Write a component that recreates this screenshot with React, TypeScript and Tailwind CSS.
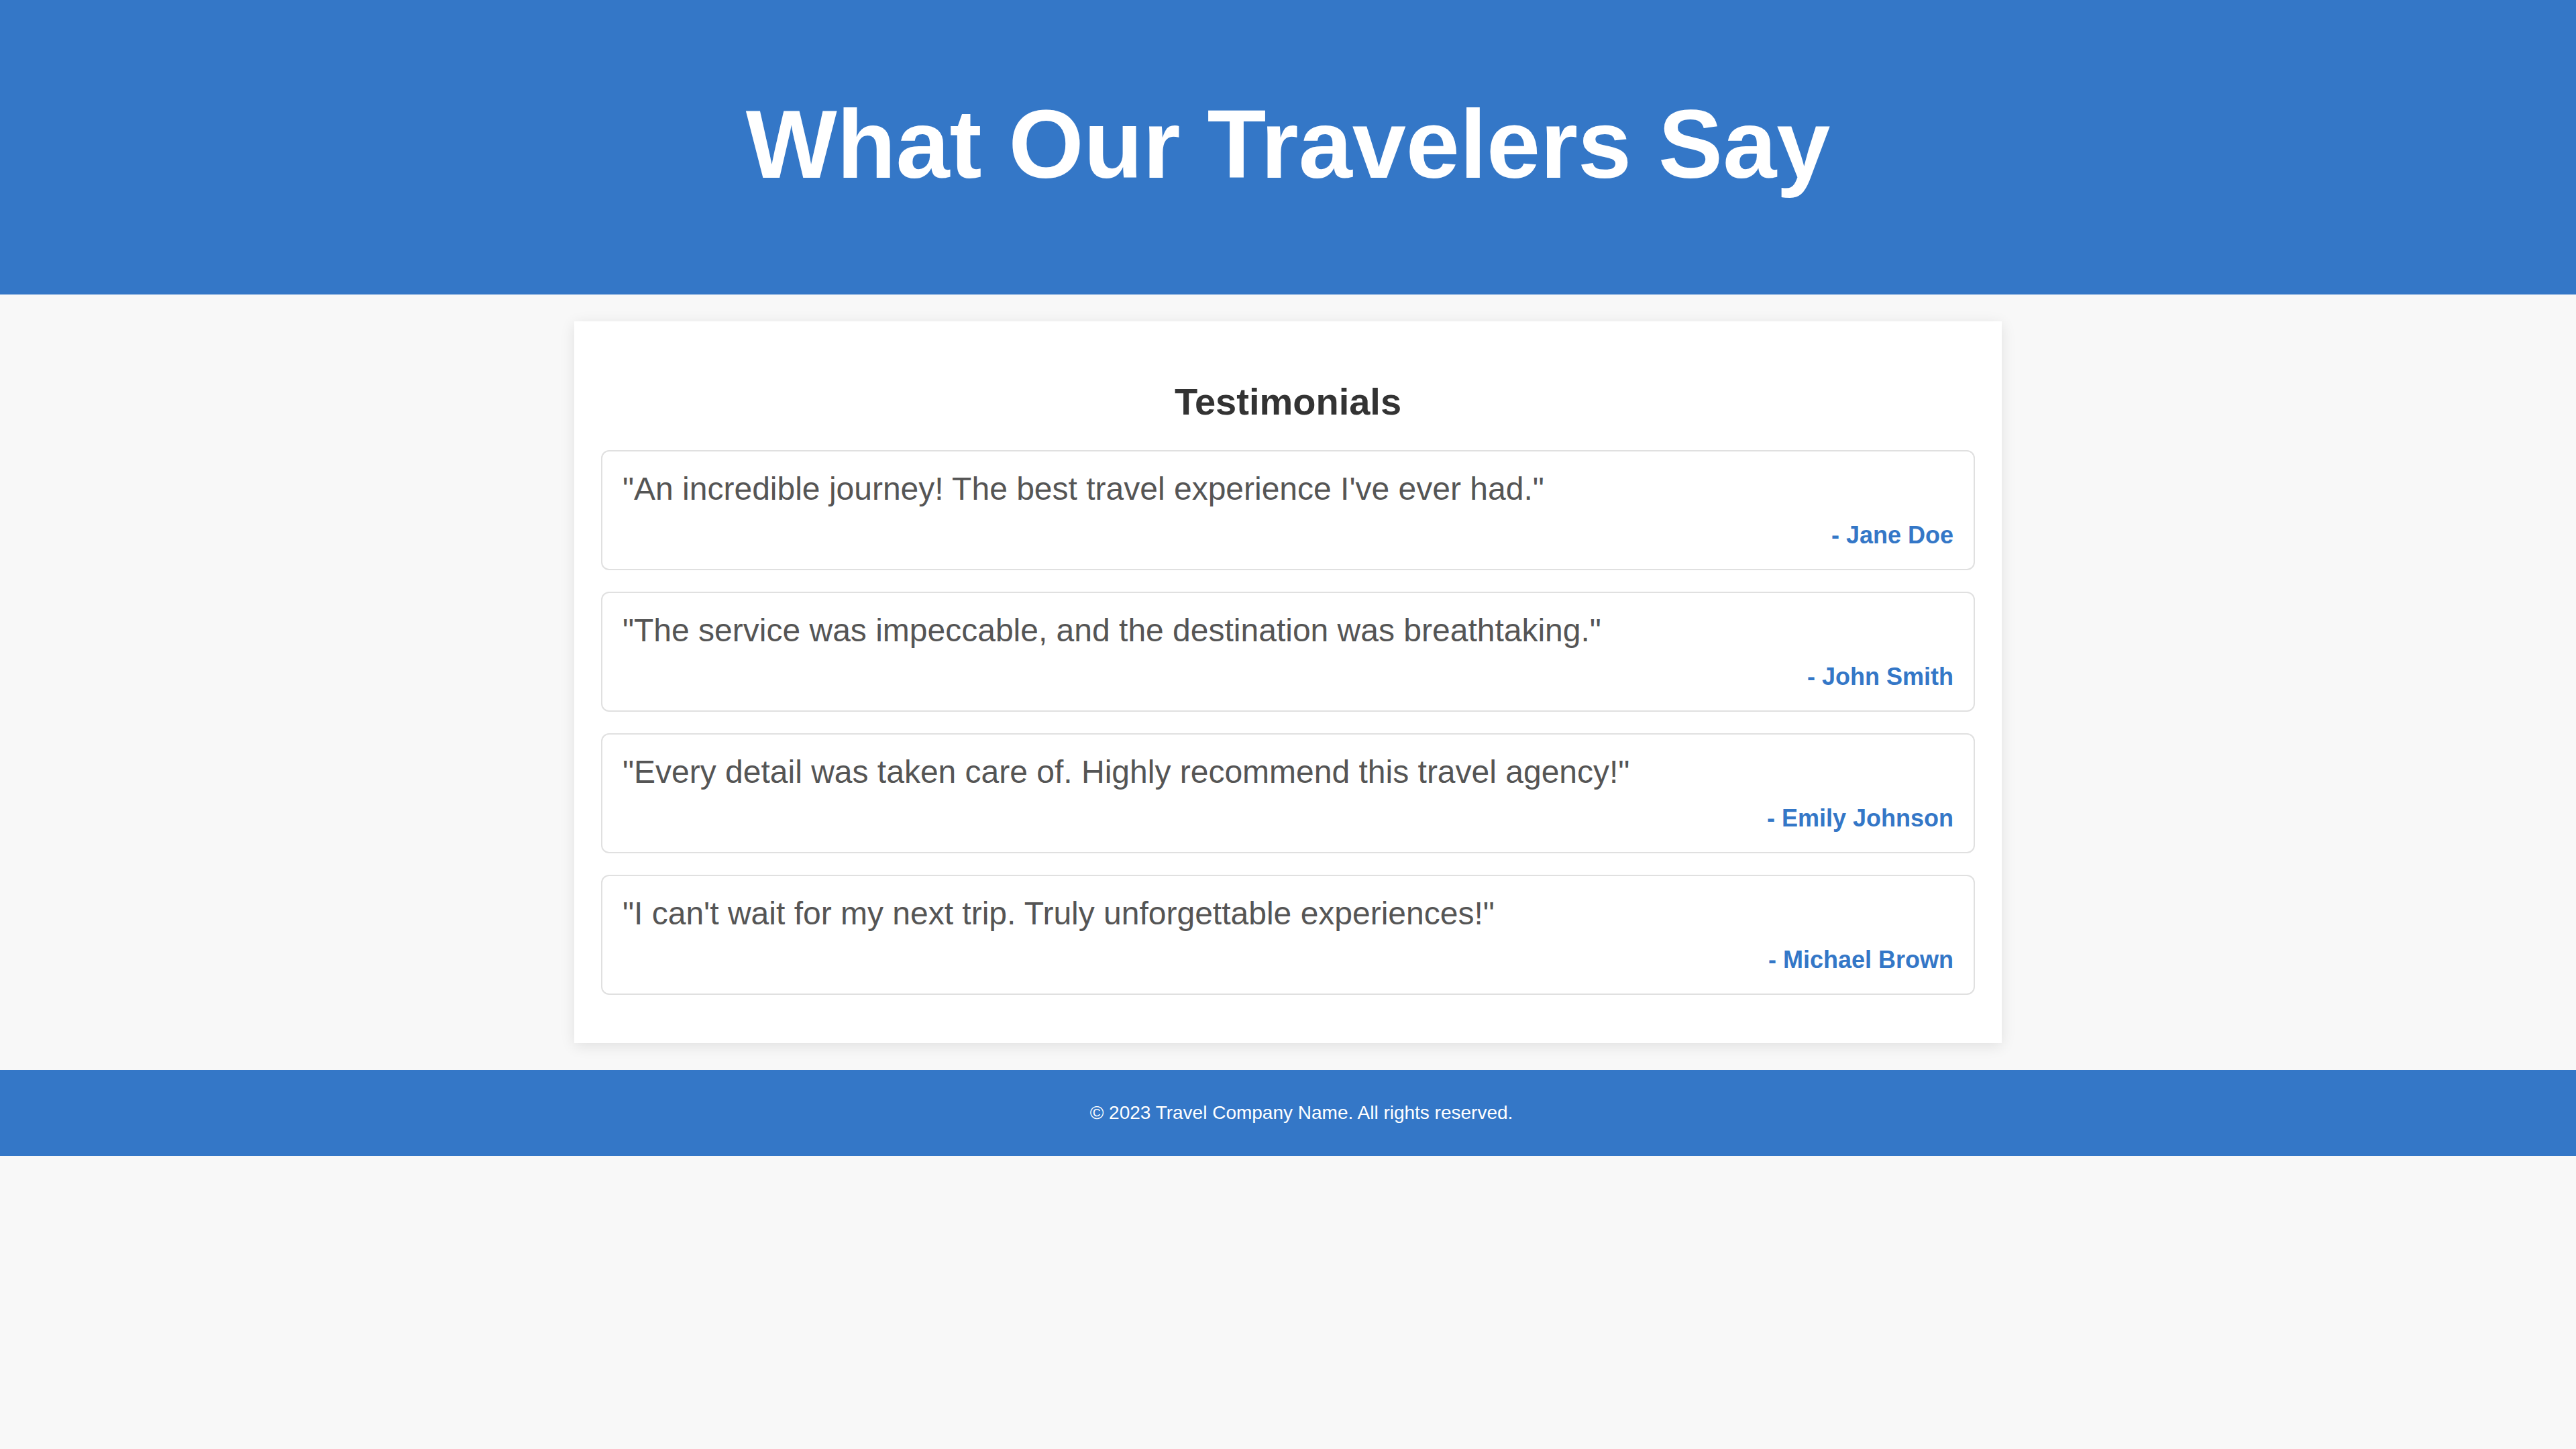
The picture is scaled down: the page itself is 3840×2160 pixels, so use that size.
const testimonials = [
  {
    quote: "\"An incredible journey! The best travel experience I've ever had.\"",
    author: "- Jane Doe",
  },
  {
    quote: "\"The service was impeccable, and the destination was breathtaking.\"",
    author: "- John Smith",
  },
  {
    quote: "\"Every detail was taken care of. Highly recommend this travel agency!\"",
    author: "- Emily Johnson",
  },
  {
    quote: "\"I can't wait for my next trip. Truly unforgettable experiences!\"",
    author: "- Michael Brown",
  },
];

export default function App() {
  return (
    <div className="min-h-[2160px] bg-[#f8f8f8] font-['Liberation_Sans',Arial,sans-serif]">
      <header className="bg-[#3477c7] pt-[133px] pb-[140px] text-center">
        <h1 className="text-[144px] leading-[166px] font-bold text-white">
          What Our Travelers Say
        </h1>
      </header>

      <main className="w-[2128px] mx-auto mt-[40px] bg-white p-[40px] shadow-[0_4px_20px_rgba(0,0,0,0.1)]">
        <h2 className="mt-[48px] mb-[40px] text-center text-[56px] leading-[64px] font-bold text-[#333]">
          Testimonials
        </h2>
        {testimonials.map((t, i) => (
          <div
            key={i}
            className="mb-[32px] rounded-[12px] border-2 border-[#e0e0e0] pt-[28px] pb-[30px] px-[30px]"
          >
            <p className="text-[48px] leading-[56px] text-[#555]">{t.quote}</p>
            <p className="mt-[21px] text-right text-[36px] leading-[40px] font-bold text-[#3477c7]">
              {t.author}
            </p>
          </div>
        ))}
      </main>

      <footer className="mt-[40px] bg-[#3477c7] py-[48px] pl-[40px] text-center">
        <p className="text-[28px] leading-[32px] text-white">
          © 2023 Travel Company Name. All rights reserved.
        </p>
      </footer>
    </div>
  );
}
